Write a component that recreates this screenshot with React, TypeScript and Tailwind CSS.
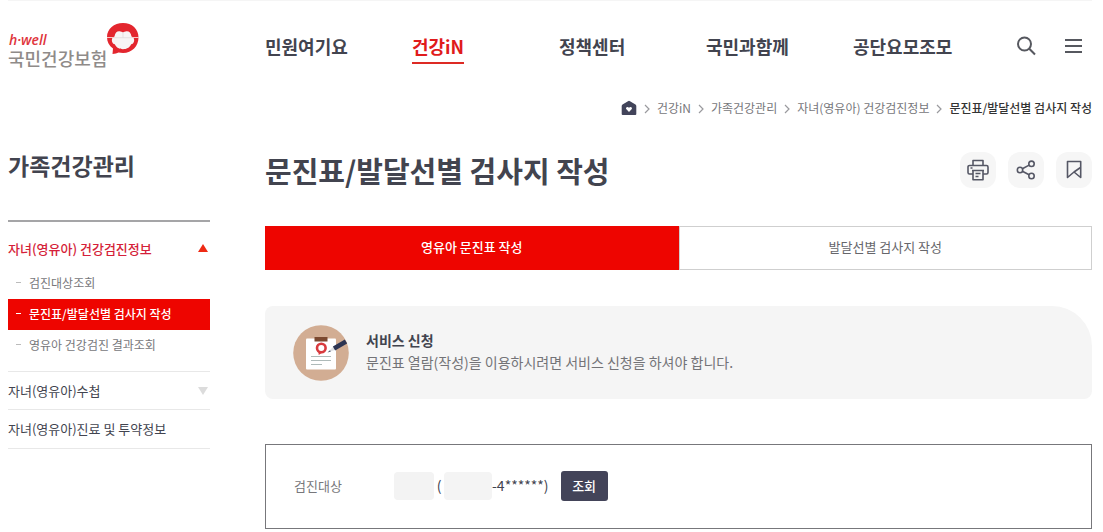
import type { ReactNode } from "react";

const navItems = ["민원여기요", "건강iN", "정책센터", "국민과함께", "공단요모조모"];
const crumbs = ["건강iN", "가족건강관리", "자녀(영유아) 건강검진정보"];
const subItems = ["검진대상조회", "문진표/발달선별 검사지 작성", "영유아 건강검진 결과조회"];

function Logo() {
  return (
    <a href="#" aria-label="국민건강보험 홈" className="flex w-[257px] shrink-0 items-start">
      <span className="flex flex-col pt-2">
        <span className="pl-px font-['Open_Sans'] text-[14px] font-semibold italic leading-[18px] text-[#e0343c]">
          h·well
        </span>
        <span className="text-[18px] font-medium leading-[18px] text-[#8f8b89]">국민건강보험</span>
      </span>
      <svg className="h-8 w-8" viewBox="0 0 32 32" aria-hidden="true">
        <path d="M16 0C7 0 0 6 0 14c0 5 2 8.500 6 11.500L5.500 31c2.500 0 4.500-.6 6-1.400 1.500.4 3 .4 4.500.4 9 0 15.500-7 15.500-15.500C31.500 6 25 0 16 0Z" fill="#e3262e" />
        <path d="M7.500 13.500C8 9.500 10 8 12.500 8.200c1.500.1 2.500.6 3.500 1.300 1-.7 2-1.200 3.500-1.300 2.500-.2 4.500 1.300 5 5.300 2.500.5 3 3 2.500 5-.4 1.700-1.500 2.500-2.800 2.800C22.500 25 19.500 26.200 16 26.200s-6.500-1.200-8.200-4.900C6.500 21 5.400 20.200 5 18.500c-.5-2 0-4.500 2.500-5Z" fill="#f7f5f5" />
        <path d="M0 14.500h7M25 14.500h7" stroke="#f8c4c4" strokeWidth="1" />
        <path d="M7 14.700h18M16 9.500v5" stroke="#dcd8d8" strokeWidth=".7" />
      </svg>
    </a>
  );
}

function SearchIcon() {
  return (
    <svg className="h-5 w-5" viewBox="0 0 20 20" fill="none" stroke="#56585f" strokeWidth="2">
      <circle cx="8.500" cy="8" r="6.500" />
      <path d="m13.300 12.800 5.700 5.700" />
    </svg>
  );
}

function MenuIcon() {
  return (
    <svg className="h-5 w-5" viewBox="0 0 20 20" stroke="#56585f" strokeWidth="2">
      <path d="M1 4h17M1 10h17M1 16h17" />
    </svg>
  );
}

function Chevron() {
  return (
    <svg className="h-3 w-2 shrink-0" viewBox="0 0 8 12" fill="none" stroke="#9a9a9e" strokeWidth="1.200">
      <path d="m2 3 4 4-4 4" />
    </svg>
  );
}

function HomeIcon() {
  return (
    <svg className="h-4 w-4" viewBox="0 0 16 16">
      <path d="M7 1.200a1.700 1.700 0 0 1 2 0l5.500 3.200c.5.3.8.9.8 1.500V14a1 1 0 0 1-1 1H1.700a1 1 0 0 1-1-1V5.900c0-.6.3-1.200.8-1.500Z" fill="#42445a" />
      <path d="M8 12 5.400 9.300C4 7.700 6.500 5.900 8 7.700c1.500-1.800 4 0 2.600 1.600Z" fill="#fff" />
    </svg>
  );
}

function ToolButton({ label, children }: { label: string; children: ReactNode }) {
  return (
    <button type="button" aria-label={label} className="grid h-9 w-9 place-items-center rounded-xl bg-[#f6f6f6]">
      <svg className="h-[22px] w-[22px]" viewBox="0 0 22 22" fill="none" stroke="#555765" strokeWidth="1.600" strokeLinejoin="round">
        {children}
      </svg>
    </button>
  );
}

function ServiceArt() {
  return (
    <svg className="h-14 w-14 shrink-0" viewBox="0 0 56 56" aria-hidden="true">
      <circle cx="28" cy="28" r="27.800" fill="#d2ad93" />
      <rect x="13" y="13.500" width="30" height="31" rx="1" fill="#fff" />
      <rect x="21.500" y="12" width="13" height="4.500" fill="#7b4930" />
      <circle cx="28.300" cy="23" r="4.300" fill="#fff" stroke="#d83a3e" strokeWidth="2.600" />
      <path d="m25.500 27 .2 3 3-2" fill="#d83a3e" />
      <path d="M18 31.500h20M18 35.500h20M18 39.500h11" stroke="#aebab9" strokeWidth="1" />
      <path d="m34.500 27.500 5.500-5.500 2 3Z" fill="#dfe1e5" />
      <path d="m34.500 27.500 2.500-2.300.8 1.200Z" fill="#44506b" />
      <path d="m41 23.500 12-7" stroke="#2c3452" strokeWidth="4.500" />
    </svg>
  );
}

export default function App() {
  return (
    <div className="bg-white pl-2 pr-[11px] font-['Noto_Sans_CJK_KR',sans-serif] text-[#42444f]">
      <header className="flex items-start border-t border-[#f5f5f5] pt-[22px]">
        <Logo />
        <nav className="grid min-w-0 flex-1 grid-cols-[repeat(5,147px)] pt-[7px]">
          {navItems.map((item) => (
            <a
              key={item}
              href="#"
              className={
                item === "건강iN"
                  ? "justify-self-start border-b-2 border-[#dd2a24] text-[18px] font-bold leading-8 text-[#e01b1b]"
                  : "justify-self-start text-[18px] font-bold leading-8"
              }
            >
              {item}
            </a>
          ))}
        </nav>
        <div className="flex gap-7 pr-2 pt-[13px]">
          <button type="button" aria-label="검색">
            <SearchIcon />
          </button>
          <button type="button" aria-label="전체메뉴">
            <MenuIcon />
          </button>
        </div>
      </header>

      <nav aria-label="현재 위치" className="mt-[31px] flex items-center justify-end gap-1.5 text-[12px] leading-5 text-[#77777b]">
        <a href="#" aria-label="홈">
          <HomeIcon />
        </a>
        <Chevron />
        {crumbs.map((crumb) => (
          <span key={crumb} className="flex items-center gap-1.5">
            <a href="#">{crumb}</a>
            <Chevron />
          </span>
        ))}
        <span className="font-medium text-[#333]">문진표/발달선별 검사지 작성</span>
      </nav>

      <div className="flex gap-[55px]">
        <aside className="w-[202px] shrink-0 pt-[27px]">
          <h2 className="text-[23px] font-bold leading-10">가족건강관리</h2>
          <div className="mt-[35px] border-t-2 border-[#a5a5a7] pt-[15px]">
            <a href="#" className="flex items-center justify-between pr-0.5 text-[13px] font-medium leading-6 text-[#d51f3a]">
              자녀(영유아) 건강검진정보
              <svg className="h-2.5 w-2.5" viewBox="0 0 10 10">
                <path d="M5 0 10 8H0Z" fill="#ee2a14" />
              </svg>
            </a>
            <ul className="mt-[7px] pb-2.5 text-[12px]">
              {subItems.map((item, i) => (
                <li key={item}>
                  <a
                    href="#"
                    className={
                      i === 1
                        ? "flex h-[31px] items-center gap-2 bg-[#ee0500] pb-0.5 pl-2 font-medium text-white"
                        : "flex h-[31px] items-center gap-2 pb-0.5 pl-2 text-[#77777b]"
                    }
                  >
                    <span className={i === 1 ? "h-px w-[5px] bg-white" : "h-px w-[5px] bg-[#bbb]"} />
                    {item}
                  </a>
                </li>
              ))}
            </ul>
            <a href="#" className="flex h-[38px] items-center justify-between border-t border-[#e8e8e8] pr-0.5 text-[13px]">
              자녀(영유아)수첩
              <svg className="h-2.5 w-2.5" viewBox="0 0 10 10">
                <path d="M0 1h10L5 9Z" fill="#dcdcdc" />
              </svg>
            </a>
            <a href="#" className="flex h-10 items-center border-y border-[#e8e8e8] text-[13px]">
              자녀(영유아)진료 및 투약정보
            </a>
          </div>
        </aside>

        <main className="min-w-0 flex-1 pt-[33px]">
          <div className="flex items-center justify-between">
            <h1 className="text-[29px] font-bold leading-[38px]">문진표/발달선별 검사지 작성</h1>
            <div className="flex gap-3">
              <ToolButton label="인쇄">
                <path d="M6 6.500V1.500h10v5M6 15H2.500a1.500 1.500 0 0 1-1.500-1.500V8A1.500 1.500 0 0 1 2.500 6.500h17A1.500 1.500 0 0 1 21 8v5.500a1.500 1.500 0 0 1-1.500 1.500H16" />
                <path d="M5 11.500h12M6 11.500h10v9.300H6ZM3.500 9h2M8.500 14.500h5M8.500 17.500h3" />
              </ToolButton>
              <ToolButton label="공유">
                <circle cx="5" cy="11" r="2.700" />
                <circle cx="16.500" cy="4.800" r="2.700" />
                <circle cx="16.500" cy="17" r="2.700" />
                <path d="m7.400 9.700 6.700-3.600M7.400 12.300l6.700 3.500" />
              </ToolButton>
              <ToolButton label="북마크">
                <path d="M4.500 2.500h13.200v16L11 13l-6.500 5.500ZM11 13l6.500-4.500" />
              </ToolButton>
            </div>
          </div>

          <div role="tablist" className="mt-[37px] grid grid-cols-2 text-[13px]">
            <button type="button" role="tab" aria-selected="true" className="h-11 bg-[#ee0500] pb-0.5 font-medium text-white">
              영유아 문진표 작성
            </button>
            <button type="button" role="tab" aria-selected="false" className="h-11 border border-[#cfcfcf] bg-white pb-0.5 text-[#66666b]">
              발달선별 검사지 작성
            </button>
          </div>

          <section className="mt-9 flex h-[93px] items-center gap-[17px] rounded-lg rounded-tr-[40px] bg-[#f5f5f5] pl-7">
            <ServiceArt />
            <div className="pb-1 text-[14px] leading-[22px]">
              <h3 className="font-bold">서비스 신청</h3>
              <p className="text-[#737377]">문진표 열람(작성)을 이용하시려면 서비스 신청을 하셔야 합니다.</p>
            </div>
          </section>

          <section className="mt-[45px] flex h-[85px] items-center border border-[#77777b] pb-0.5 pl-7">
            <span className="w-[100px] text-[13px] text-[#77777b]">검진대상</span>
            <span className="flex items-center text-[14px]">
              <span className="h-7 w-10 rounded-sm bg-[#f3f3f3]" />
              <span className="w-2.5 text-center">(</span>
              <span className="h-7 w-12 rounded-sm bg-[#f4f4f4]" />
              <span>-4******)</span>
            </span>
            <button type="button" className="ml-3 h-[30px] w-[47px] rounded-[3px] bg-[#434459] text-[13px] font-medium text-white">
              조회
            </button>
          </section>
        </main>
      </div>
    </div>
  );
}
